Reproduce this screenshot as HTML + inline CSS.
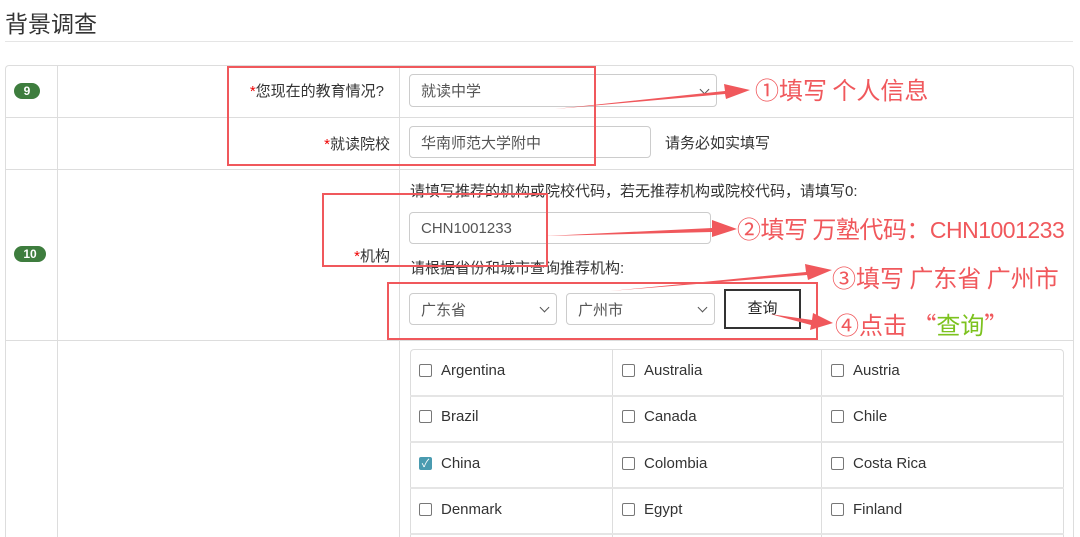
<!DOCTYPE html>
<html style="overflow:hidden;height:537px"><head><meta charset="utf-8"><style>
*{box-sizing:border-box;margin:0;padding:0}
body{width:1080px;height:537px;overflow:hidden;background:#fff;position:relative;font-family:"Liberation Sans","Noto Sans CJK SC",sans-serif;color:#333;font-size:15px}
.a{position:absolute}
.hl{position:absolute;height:1px;background:#ddd}
.vl{position:absolute;width:1px;background:#ddd}
.badge{position:absolute;background:#3e7d3e;color:#fff;font-weight:bold;font-size:12px;border-radius:9px;text-align:center;height:16px;line-height:16px}
.inp{position:absolute;border:1px solid #ccc;border-radius:4px;color:#555;font-size:15px;padding-left:11px;display:flex;align-items:center}
.lbl{position:absolute;text-align:right;font-size:15px;color:#333}
.lbl b{color:#e00;font-weight:normal}
.red{position:absolute;border:2px solid #f0585c}
.ann{position:absolute;color:#f0585c;font-size:24px;font-family:"Noto Sans CJK SC",sans-serif;white-space:nowrap;line-height:1}
.ann span.l{font-family:"Liberation Sans",sans-serif;font-size:23px}
.cb{position:absolute;font-size:15px;color:#333;display:flex;align-items:center}
.cb i{display:inline-block;width:13px;height:13px;border:1px solid #777;border-radius:2px;margin-right:9px}
.cb i.on{background:#4a9bb0;border-color:#4a9bb0;color:#fff;font-style:normal;font-size:11px;line-height:12px;text-align:center}
.chev{position:absolute;right:8px;top:50%;margin-top:-5px;width:7px;height:7px;border-right:1.3px solid #555;border-bottom:1.3px solid #555;transform:rotate(45deg)}
</style></head><body>
<div class="a" style="left:5px;top:5px;font-size:23px;color:#333;font-family:'Noto Sans CJK SC',sans-serif">背景调查</div>
<div class="hl" style="left:5px;top:41px;width:1068px;background:#e5e5e5"></div>

<div class="a" style="left:5px;top:65px;width:1069px;height:472px;border:1px solid #ddd;border-bottom:none;border-radius:4px 4px 0 0"></div>
<div class="vl" style="left:57px;top:65px;height:472px"></div>
<div class="vl" style="left:399px;top:65px;height:472px"></div>
<div class="hl" style="left:5px;top:117px;width:1069px"></div>
<div class="hl" style="left:5px;top:169px;width:1069px"></div>
<div class="hl" style="left:5px;top:340px;width:1069px"></div>

<div class="badge" style="left:14px;top:83px;width:26px">9</div>
<div class="badge" style="left:14px;top:246px;width:32px">10</div>

<div class="lbl" style="left:200px;top:80px;width:184px"><b>*</b>您现在的教育情况?</div>
<div class="lbl" style="left:200px;top:133px;width:190px"><b>*</b>就读院校</div>
<div class="lbl" style="left:200px;top:245px;width:190px"><b>*</b>机构</div>

<div class="inp" style="left:409px;top:74px;width:308px;height:33px">就读中学<span class="chev"></span></div>
<div class="inp" style="left:409px;top:126px;width:242px;height:32px">华南师范大学附中</div>
<div class="a" style="left:665px;top:132px;font-size:15px">请务必如实填写</div>
<div class="a" style="left:410px;top:180px;font-size:15px">请填写推荐的机构或院校代码，若无推荐机构或院校代码，请填写0:</div>
<div class="inp" style="left:409px;top:212px;width:302px;height:32px">CHN1001233</div>
<div class="a" style="left:410px;top:257px;font-size:15px">请根据省份和城市查询推荐机构:</div>
<div class="inp" style="left:409px;top:293px;width:148px;height:32px">广东省<span class="chev"></span></div>
<div class="inp" style="left:566px;top:293px;width:149px;height:32px">广州市<span class="chev"></span></div>
<div class="a" style="left:724px;top:289px;width:77px;height:40px;border:2px solid #333;text-align:center;line-height:36px;font-size:15px;color:#222">查询</div>

<div class="a" style="left:410px;top:349px;width:654px;height:188px;border:1px solid #ddd;border-bottom:none;border-radius:4px 4px 0 0"></div>
<div class="vl" style="left:612px;top:349px;height:188px"></div>
<div class="vl" style="left:821px;top:349px;height:188px"></div>
<div class="hl" style="left:410px;top:395px;width:654px;height:2px;background:#e5e5e5"></div>
<div class="hl" style="left:410px;top:441px;width:654px;height:2px;background:#e5e5e5"></div>
<div class="hl" style="left:410px;top:487px;width:654px;height:2px;background:#e5e5e5"></div>
<div class="hl" style="left:410px;top:533px;width:654px;height:2px;background:#e5e5e5"></div>

<div class="cb" style="left:419px;top:362px"><i></i>Argentina</div>
<div class="cb" style="left:622px;top:362px"><i></i>Australia</div>
<div class="cb" style="left:831px;top:362px"><i></i>Austria</div>
<div class="cb" style="left:419px;top:408px"><i></i>Brazil</div>
<div class="cb" style="left:622px;top:408px"><i></i>Canada</div>
<div class="cb" style="left:831px;top:408px"><i></i>Chile</div>
<div class="cb" style="left:419px;top:455px"><i class="on">✓</i>China</div>
<div class="cb" style="left:622px;top:455px"><i></i>Colombia</div>
<div class="cb" style="left:831px;top:455px"><i></i>Costa Rica</div>
<div class="cb" style="left:419px;top:501px"><i></i>Denmark</div>
<div class="cb" style="left:622px;top:501px"><i></i>Egypt</div>
<div class="cb" style="left:831px;top:501px"><i></i>Finland</div>

<div class="red" style="left:227px;top:66px;width:369px;height:100px"></div>
<div class="red" style="left:322px;top:193px;width:226px;height:74px"></div>
<div class="red" style="left:387px;top:282px;width:431px;height:58px"></div>

<svg class="a" style="left:0;top:0" width="1080" height="537">
<g fill="#f0585c">
<polygon points="555,109 725,91 724,84 750,90 726,99 725,94"/>
<polygon points="545,236 712,228 712,220 737,229 712,237 712,232"/>
<polygon points="610,291 806,272 805,264 832,270 808,280 807,275"/>
<polygon points="770,314 812,320 813,313 833,323 810,330 811,325"/>
</g>
</svg>
<div class="ann" style="left:755px;top:77px">①填写 个人信息</div>
<div class="ann" style="left:737px;top:216px;letter-spacing:-0.5px">②填写 万塾代码：<span class="l">CHN1001233</span></div>
<div class="ann" style="left:832px;top:265px">③填写 广东省 广州市</div>
<div class="ann" style="left:835px;top:312px">④点击 “<span style="color:#7cc21e">查询</span>”</div>
</body></html>
